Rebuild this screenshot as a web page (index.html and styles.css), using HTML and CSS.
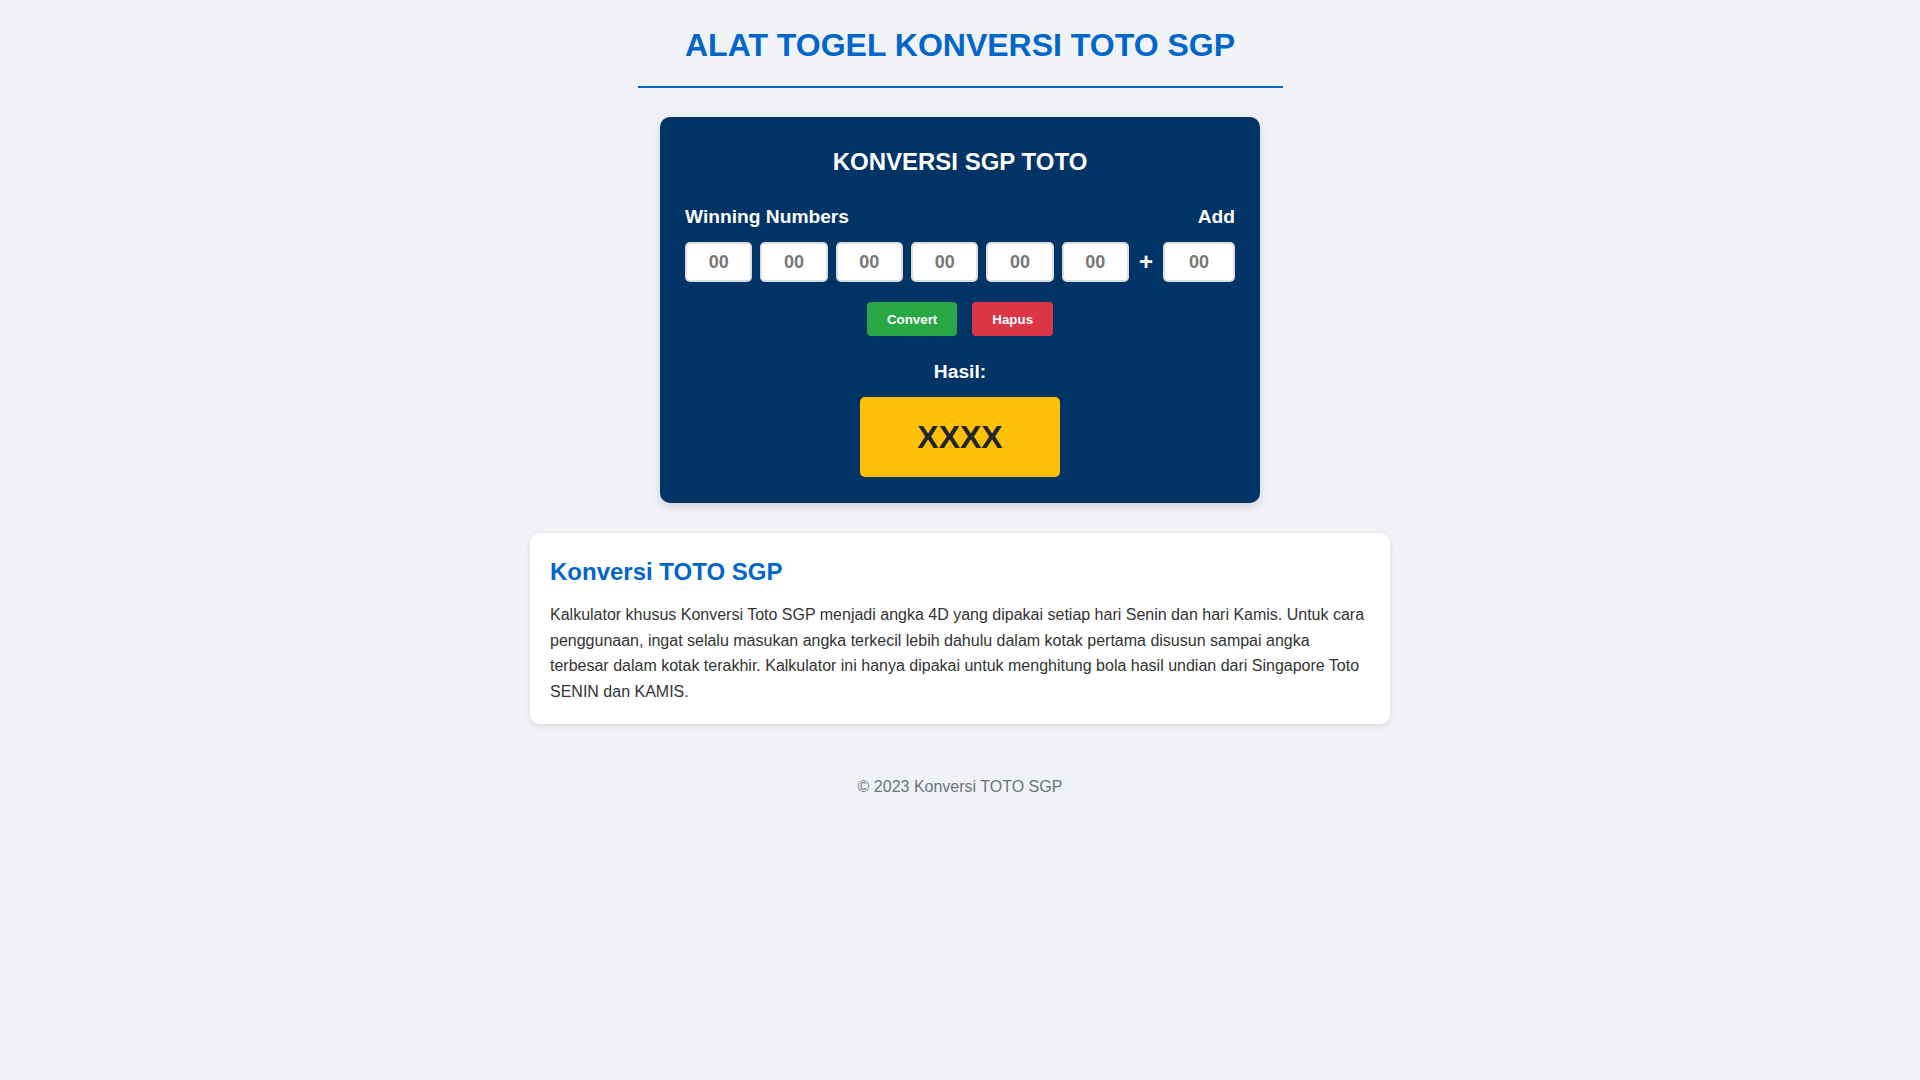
FILE: index.html
```html
<!DOCTYPE HTML>
<html lang="id">
<head>
    <meta charset="utf-8"/>
    <title>Konversi TOTO SGP</title>
    <link rel="stylesheet" href="styles.css">
</head>
<body>
<header class="page-header">
    <h1>ALAT TOGEL KONVERSI TOTO SGP</h1>
</header>

<div class="converter">
    <h2>KONVERSI SGP TOTO</h2>

    <div class="label-row">
        <span>Winning Numbers</span>
        <span>Add</span>
    </div>

    <div class="number-row">
        <input class="num" type="text" maxlength="2" placeholder="00">
        <input class="num" type="text" maxlength="2" placeholder="00">
        <input class="num" type="text" maxlength="2" placeholder="00">
        <input class="num" type="text" maxlength="2" placeholder="00">
        <input class="num" type="text" maxlength="2" placeholder="00">
        <input class="num" type="text" maxlength="2" placeholder="00">
        <span class="plus">+</span>
        <input class="num num-add" type="text" maxlength="2" placeholder="00">
    </div>

    <div class="buttons">
        <button class="btn btn-convert">Convert</button>
        <button class="btn btn-clear">Hapus</button>
    </div>

    <div class="result-label">Hasil:</div>
    <div class="result">XXXX</div>
</div>

<div class="info">
    <h2>Konversi TOTO SGP</h2>
    <p>Kalkulator khusus Konversi Toto SGP menjadi angka 4D yang dipakai setiap hari Senin dan hari Kamis. Untuk cara penggunaan, ingat selalu masukan angka terkecil lebih dahulu dalam kotak pertama disusun sampai angka terbesar dalam kotak terakhir. Kalkulator ini hanya dipakai untuk menghitung bola hasil undian dari Singapore Toto SENIN dan KAMIS.</p>
</div>

<footer class="page-footer">&copy; 2023 Konversi TOTO SGP</footer>
</body>
</html>
```

FILE: styles.css
```css
body {
    margin: 0;
    padding: 0;
    background: #f0f2f5;
    font-family: "Liberation Sans", Arial, sans-serif;
    color: #333;
}

.page-header {
    width: 645px;
    margin: 0 auto 29px;
    padding: 27px 0 22px;
    border-bottom: 2px solid #0066cc;
    text-align: center;
}

.page-header h1 {
    margin: 0;
    font-size: 32px;
    line-height: 37px;
    color: #0066cc;
}

/* kotak konversi */
.converter {
    box-sizing: border-box;
    width: 600px;
    margin: 0 auto;
    padding: 25px 25px 26px;
    background: #003366;
    border-radius: 10px;
    box-shadow: 0 4px 10px rgba(0, 0, 0, 0.12);
    color: #fff;
}

.converter h2 {
    margin: 6px 0 0;
    font-size: 24px;
    line-height: 28px;
    text-align: center;
}

.label-row {
    display: flex;
    justify-content: space-between;
    margin-top: 29.5px;
    font-size: 19.2px;
    line-height: 22px;
    font-weight: bold;
}

.number-row {
    display: flex;
    align-items: center;
    gap: 8px;
    margin-top: 14.5px;
}

.num {
    box-sizing: border-box;
    flex: 1;
    min-width: 0;
    height: 40px;
    padding: 0;
    border: 2px solid #ddd;
    border-radius: 5px;
    background: #fff;
    font-family: inherit;
    font-size: 18px;
    font-weight: bold;
    color: #333;
    text-align: center;
}

.num::placeholder {
    color: #777;
}

.num-add {
    flex: 0 0 72px;
}

.plus {
    width: 18px;
    font-size: 24px;
    font-weight: bold;
    text-align: center;
}

.buttons {
    display: flex;
    justify-content: center;
    gap: 15px;
    margin-top: 20px;
}

.btn {
    height: 34px;
    padding: 0 20px;
    border: none;
    border-radius: 4px;
    font-family: inherit;
    font-size: 13.33px;
    font-weight: bold;
    color: #fff;
    cursor: pointer;
}

.btn-convert {
    background: #28a745;
}

.btn-clear {
    background: #dc3545;
}

.result-label {
    margin-top: 25px;
    font-size: 19.2px;
    line-height: 22px;
    font-weight: bold;
    text-align: center;
}

.result {
    display: flex;
    align-items: center;
    justify-content: center;
    width: 200px;
    height: 80px;
    margin: 14px auto 0;
    background: #ffc107;
    border-radius: 5px;
    font-size: 32px;
    font-weight: bold;
    color: #212529;
}

/* keterangan */
.info {
    box-sizing: border-box;
    width: 860px;
    margin: 30px auto 0;
    padding: 20px;
    background: #fff;
    border-radius: 10px;
    box-shadow: 0 2px 6px rgba(0, 0, 0, 0.1);
}

.info h2 {
    margin: 5px 0 0;
    font-size: 24px;
    line-height: 28px;
    color: #0066cc;
}

.info p {
    margin: 16px 0 0;
    font-size: 16px;
    line-height: 1.6;
}

.page-footer {
    margin-top: 54px;
    font-size: 16px;
    color: #6c757d;
    text-align: center;
}
```
